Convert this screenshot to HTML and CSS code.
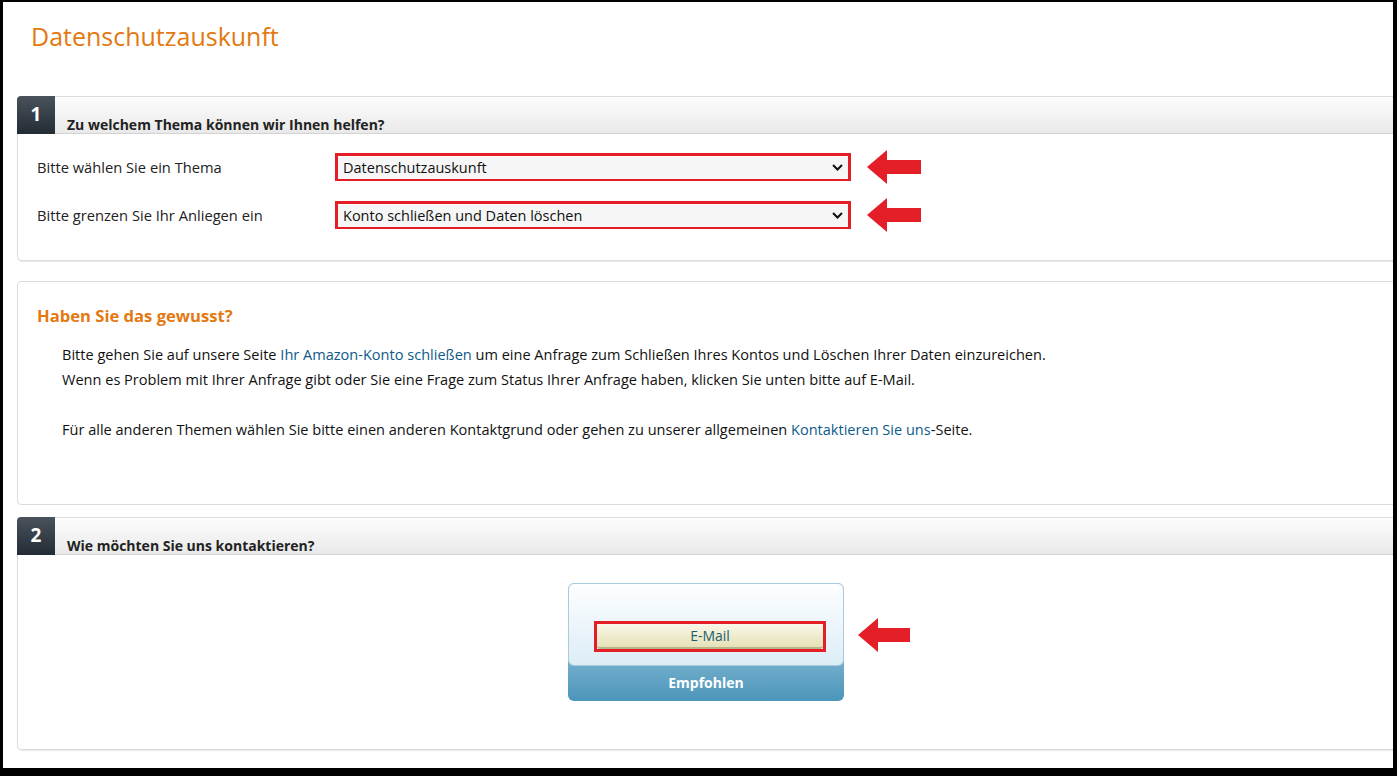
FILE: index.html
```html
<!DOCTYPE html>
<html lang="de">

<head>
    <meta charset="UTF-8">
    <meta name="viewport" content="width=device-width, initial-scale=1.0">
    <link rel="stylesheet" href="styles.css">
    <title>Datenschutzauskunft</title>
</head>

<body>
    <div class="frame">
        <h1 class="page-title">Datenschutzauskunft</h1>

        <!-- step 1: topic -->
        <div class="step">
            <div class="step-head">
                <div class="step-num">1</div>
                <div class="step-title">Zu welchem Thema können wir Ihnen helfen?</div>
            </div>
            <div class="step-body topics">
                <div class="topic-row">
                    <label class="topic-label">Bitte wählen Sie ein Thema</label>
                    <div class="select-box">
                        <select class="topic-select">
                            <option>Datenschutzauskunft</option>
                        </select>
                        <svg class="chevron" width="11" height="7" viewBox="0 0 11 7"><path d="M1 1l4.5 4.5L10 1" fill="none" stroke="#111" stroke-width="2"/></svg>
                    </div>
                    <svg class="arrow" width="54" height="34" viewBox="0 0 54 34"><polygon points="0,17 20,0 20,10 54,10 54,24 20,24 20,34" fill="#e41e26"/></svg>
                </div>
                <div class="topic-row">
                    <label class="topic-label">Bitte grenzen Sie Ihr Anliegen ein</label>
                    <div class="select-box">
                        <select class="topic-select">
                            <option>Konto schließen und Daten löschen</option>
                        </select>
                        <svg class="chevron" width="11" height="7" viewBox="0 0 11 7"><path d="M1 1l4.5 4.5L10 1" fill="none" stroke="#111" stroke-width="2"/></svg>
                    </div>
                    <svg class="arrow" width="54" height="34" viewBox="0 0 54 34"><polygon points="0,17 20,0 20,10 54,10 54,24 20,24 20,34" fill="#e41e26"/></svg>
                </div>
            </div>
        </div>

        <!-- hint box -->
        <div class="info-box">
            <h2 class="info-title">Haben Sie das gewusst?</h2>
            <div class="info-text">
                <p>Bitte gehen Sie auf unsere Seite <a href="#">Ihr Amazon-Konto schließen</a> um eine Anfrage zum Schließen Ihres Kontos und Löschen Ihrer Daten einzureichen.<br>
                Wenn es Problem mit Ihrer Anfrage gibt oder Sie eine Frage zum Status Ihrer Anfrage haben, klicken Sie unten bitte auf E-Mail.</p>
                <p>Für alle anderen Themen wählen Sie bitte einen anderen Kontaktgrund oder gehen zu unserer allgemeinen <a href="#">Kontaktieren Sie uns</a>-Seite.</p>
            </div>
        </div>

        <!-- step 2: contact -->
        <div class="step">
            <div class="step-head">
                <div class="step-num">2</div>
                <div class="step-title">Wie möchten Sie uns kontaktieren?</div>
            </div>
            <div class="step-body contact">
                <div class="contact-card">
                    <div class="card-top">
                        <div class="mail-mark">
                            <button class="mail-btn">E-Mail</button>
                        </div>
                    </div>
                    <div class="card-tag">Empfohlen</div>
                    <svg class="arrow card-arrow" width="52" height="34" viewBox="0 0 52 34"><polygon points="0,17 20,0 20,10 52,10 52,24 20,24 20,34" fill="#e41e26"/></svg>
                </div>
            </div>
        </div>
    </div>
</body>

</html>
```

FILE: styles.css
```css
  html,
  body {
      margin: 0;
      height: 100%;
      background: #000;
  }

  body {
      font-family: "Open Sans", "Liberation Sans", sans-serif;
      color: #111;
  }

  .frame {
      background: #fff;
      margin: 2px 4px 0 3px;
      height: 766px;
      overflow: hidden;
  }

  .page-title {
      margin: 0;
      padding: 17px 0 0 28px;
      height: 74px;
      box-sizing: border-box;
      font-size: 25px;
      font-weight: 400;
      color: #e47911;
  }

  /* numbered steps */

  .step {
      margin: 20px -2px 0 14px;
  }

  .info-box + .step {
      margin-top: 12px;
  }

  .step-head {
      display: flex;
      height: 38px;
  }

  .step-num {
      width: 38px;
      flex-shrink: 0;
      background: linear-gradient(#4a525c, #232b35);
      border-radius: 4px 0 0 0;
      color: #fff;
      font-weight: 700;
      font-size: 19px;
      text-align: center;
      line-height: 36px;
  }

  .step-title {
      flex: 1;
      border-top: 1px solid #dcdcdc;
      border-bottom: 1px solid #d2d2d2;
      background: linear-gradient(#fdfdfd, #f3f3f3 50%, #e9e9e9);
      font-size: 14px;
      font-weight: 700;
      color: #222;
      padding: 18px 0 0 12px;
      box-sizing: border-box;
  }

  .step-body {
      border: 1px solid #dcdcdc;
      border-top: 0;
      border-radius: 0 0 0 5px;
      box-shadow: 0 1px 1px #e5e5e5;
  }

  .topics {
      padding: 19px 0 31px 19px;
      display: flex;
      flex-direction: column;
      gap: 20px;
  }

  .topic-row {
      display: flex;
      align-items: center;
      height: 28px;
  }

  .topic-label {
      width: 298px;
      font-size: 14.7px;
      color: #222;
  }

  .select-box {
      position: relative;
      width: 516px;
      height: 28px;
      box-sizing: border-box;
      border: 3px solid #e41e26;
  }

  .topic-select {
      appearance: none;
      -webkit-appearance: none;
      width: 100%;
      height: 100%;
      border: 0;
      margin: 0;
      padding: 0 0 0 5px;
      background: #f6f6f6;
      font-family: inherit;
      font-size: 14.5px;
      color: #111;
  }

  .chevron {
      position: absolute;
      right: 5px;
      top: 8px;
  }

  .arrow {
      margin-left: 16px;
  }

  /* hint box */

  .info-box {
      margin: 20px -2px 0 14px;
      height: 224px;
      box-sizing: border-box;
      border: 1px solid #dcdcdc;
      border-radius: 4px 0 0 4px;
      padding: 22px 0 0 19px;
  }

  .info-title {
      margin: 0;
      font-size: 16.6px;
      font-weight: 700;
      color: #e47911;
  }

  .info-text {
      padding: 15px 0 0 25px;
      font-size: 14.55px;
      line-height: 25px;
      color: #111;
  }

  .info-text p {
      margin: 0 0 25px;
  }

  .info-text a {
      color: #0e5a8a;
      text-decoration: none;
  }

  /* contact options */

  .contact {
      display: flex;
      justify-content: center;
      padding: 28px 0 48px;
  }

  .contact-card {
      position: relative;
      width: 276px;
      border-radius: 6px;
      background: linear-gradient(#c4e0ee, #4b95ba);
  }

  .card-top {
      height: 83px;
      box-sizing: border-box;
      border: 1px solid #a9cbdd;
      border-radius: 6px;
      background: linear-gradient(#fdfeff, #dcedf6);
      padding: 37px 0 0 25px;
  }

  .mail-mark {
      width: 232px;
      height: 31px;
      box-sizing: border-box;
      border: 3px solid #e41e26;
  }

  .mail-btn {
      display: block;
      width: 100%;
      height: 100%;
      border: 0;
      border-bottom: 2px solid #b9b48a;
      border-radius: 3px;
      background: linear-gradient(#f8f7e8, #e6e2b8);
      font-family: inherit;
      font-size: 14px;
      color: #1b5d70;
      padding: 0;
  }

  .card-tag {
      height: 35px;
      line-height: 33px;
      text-align: center;
      color: #fff;
      font-weight: 700;
      font-size: 14px;
  }

  .card-arrow {
      position: absolute;
      left: 100%;
      top: 35px;
      margin-left: 14px;
  }
```
